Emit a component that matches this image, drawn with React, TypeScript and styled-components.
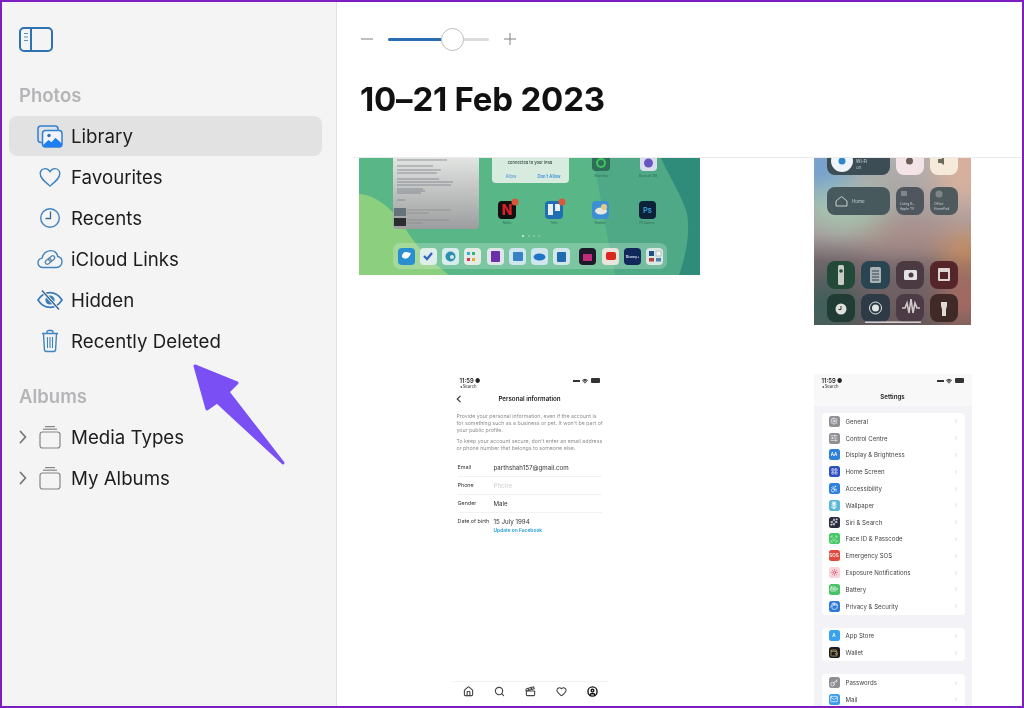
import React from 'react'
import styled, { createGlobalStyle } from 'styled-components'
import {
  Accessibility,
  BatteryFull,
  ChevronRight,
  CircleUser,
  Clapperboard,
  Flower2,
  Hand,
  Heart,
  Home,
  Key,
  LayoutGrid,
  Mail,
  ScanFace,
  Search,
  Settings,
  SlidersHorizontal,
  Sparkles,
  Sun,
  Wallet,
  Wifi,
} from 'lucide-react'

const GlobalStyle = createGlobalStyle`
  html, body { margin: 0; padding: 0; background: #fff; }
  * { box-sizing: border-box; }
`

const Frame = styled.div`
  position: relative;
  display: flex;
  width: 1024px;
  height: 708px;
  overflow: hidden;
  border: 2px solid #7d1fc0;
  font-family: Inter, 'Liberation Sans', sans-serif;
  color: #1d1d1f;
  background: #fff;
  filter: blur(0.3px);
`

const Sidebar = styled.aside`
  flex: 0 0 335px;
  padding: 24px 14px 0 7px;
  background: #f4f4f5;
  border-right: 1px solid #dfdfdf;
`

const ToggleButton = styled.svg`
  display: block;
  width: 35px;
  height: 27px;
  margin-left: 10px;
`

const SectionLabel = styled.h2<{ $gap: number }>`
  margin: ${(p) => p.$gap}px 0 9px 10px;
  height: 24px;
  font-size: 18.5px;
  line-height: 24px;
  font-weight: 600;
  color: #b5b5b8;
`

const NavList = styled.ul`
  display: flex;
  flex-direction: column;
  gap: 1px;
  margin: 0;
  padding: 0;
  list-style: none;
`

const NavRow = styled.li<{ $selected?: boolean }>`
  display: grid;
  grid-template-columns: 28px 26px 1fr;
  align-items: center;
  height: 40px;
  border-radius: 8px;
  font-size: 18.7px;
  background: ${(p) => (p.$selected ? '#e2e2e3' : 'transparent')};
`

const NavText = styled.span`
  margin-left: 8px;
`

const Chevron = styled.svg`
  width: 8px;
  height: 14px;
  margin-left: 10px;
`

const NavIcon = styled.svg`
  display: block;
  width: 26px;
  height: 24px;
`

const ArrowMark = styled.svg`
  position: absolute;
  left: 186px;
  top: 356px;
  width: 104px;
  height: 112px;
`

const Main = styled.main`
  flex: 1;
  min-width: 0;
  display: flex;
  flex-direction: column;
`

const TopBar = styled.header`
  flex: 0 0 155px;
  padding: 26px 0 0 23px;
`

const ZoomRow = styled.div`
  display: flex;
  align-items: center;
  height: 22px;
`

const ZoomGlyph = styled.svg`
  width: 14px;
  height: 14px;
`

const Track = styled.div`
  position: relative;
  width: 101px;
  height: 3px;
  margin: 0 14px;
  border-radius: 2px;
  background: #dcdcdc;
`

const TrackFill = styled.div`
  height: 100%;
  border-radius: 2px;
  background: #2a6db3;
`

const Thumb = styled.div`
  position: absolute;
  top: -10px;
  width: 23px;
  height: 23px;
  border-radius: 50%;
  background: #fff;
  border: 1px solid #bdbdbd;
`

const Title = styled.h1`
  margin: 28px 0 0 0;
  font-size: 33px;
  line-height: 42px;
  font-weight: 700;
  letter-spacing: -0.2px;
  color: #111;
`

const Divider = styled.div`
  height: 1px;
  margin-left: 16px;
  background: #ebebeb;
`

const PhotoGrid = styled.section`
  display: grid;
  grid-template-columns: 341px 341px;
  grid-template-rows: 168px 334px;
  column-gap: 22px;
  row-gap: 48px;
  padding-left: 22px;
  flex: 1;
  overflow: hidden;
`

const PhotoCell = styled.div`
  display: flex;
  justify-content: center;
  align-items: flex-start;
  overflow: hidden;
`

const Blurred = styled.svg`
  display: block;
  filter: blur(0.35px);
`

const PhoneShot = styled.div<{ $bg: string; $h: number }>`
  position: relative;
  display: flex;
  flex-direction: column;
  flex: 0 0 158px;
  width: 158px;
  height: ${(p) => p.$h}px;
  overflow: hidden;
  background: ${(p) => p.$bg};
  font-size: 5.4px;
  color: #333;
  filter: blur(0.35px);
`

const StatusBar = styled.div<{ $pad: number; $bg?: string }>`
  display: flex;
  justify-content: space-between;
  padding: 3px ${(p) => p.$pad}px 0;
  background: ${(p) => p.$bg || 'transparent'};
`

const Clock = styled.div`
  font-size: 5.8px;
  font-weight: 600;
  color: #222;
  line-height: 7px;
`

const BackLink = styled.div`
  font-size: 4.2px;
  line-height: 6px;
`

const StatusIcons = styled.div`
  display: flex;
  align-items: center;
  gap: 2.5px;
  height: 7px;
`

const Signal = styled.span`
  width: 7px;
  height: 3px;
  border-bottom: 2px solid #333;
`

const Battery = styled.span`
  width: 9px;
  height: 5px;
  border-radius: 1px;
  background: #333;
`

const ProfileNav = styled.div`
  position: relative;
  margin-top: 2px;
  height: 14px;
  line-height: 14px;
  text-align: center;
  font-size: 6.2px;
  font-weight: 600;
  color: #222;
`

const BackChevron = styled.svg`
  position: absolute;
  left: 5px;
  top: 3px;
  width: 6px;
  height: 8px;
`

const Notice = styled.p`
  margin: 7px 5px 0 6px;
  font-size: 5.25px;
  line-height: 6.8px;
  color: #8e8e8e;
  & + & {
    margin-top: 5px;
  }
`

const ProfileRows = styled.div`
  margin: 7px 0 0 7px;
  display: flex;
  flex-direction: column;
`

const ProfileRow = styled.div`
  display: grid;
  grid-template-columns: 36px 1fr;
  align-items: center;
  height: 18px;
  margin-right: 7px;
  font-size: 6.2px;
  border-bottom: 1px solid #f3f3f3;
  & > span:first-child {
    font-size: 5.4px;
  }
`

const BirthRow = styled(ProfileRow)`
  align-items: start;
  height: 24px;
  padding-top: 5px;
  border-bottom: 0;
`

const Placeholder = styled.span`
  color: #cfcfcf;
`

const FacebookLink = styled.div`
  margin-top: 2px;
  font-size: 4.9px;
  font-weight: 600;
  color: #2b9fd8;
`

const TabBar = styled.div`
  margin-top: auto;
  display: flex;
  justify-content: space-between;
  align-items: center;
  height: 19px;
  padding: 0 10.5px 0 12px;
  border-top: 1px solid #f3f3f3;
  color: #444;
`

const SettingsHead = styled.div`
  background: #f8f8f9;
  height: 32px;
`

const SettingsTitle = styled.div`
  margin-top: 2px;
  text-align: center;
  font-size: 6.2px;
  font-weight: 600;
  line-height: 10px;
  color: #222;
`

const SettingsBody = styled.div`
  display: flex;
  flex-direction: column;
  gap: 13px;
  padding: 7px 7px 0 8px;
`

const SettingsGroup = styled.div`
  border-radius: 4px;
  background: #fff;
`

const SettingsRow = styled.div`
  display: grid;
  grid-template-columns: 11px 1fr 6px;
  column-gap: 6px;
  align-items: center;
  height: 16.8px;
  padding: 0 6px 0 7px;
  font-size: 6.1px;
  color: #444;
`

const AppTile = styled.span<{ $bg: string }>`
  display: flex;
  align-items: center;
  justify-content: center;
  width: 11px;
  height: 11px;
  border-radius: 2.5px;
  background: ${(p) => p.$bg};
  color: #fff;
  font-size: 4.5px;
  font-weight: 600;
`

const iconBlue = '#3f83bf'

const SidebarToggle = () => (
  <ToggleButton viewBox="0 0 35 27" fill="none" stroke="#2f72b4" strokeWidth="2">
    <rect x="1" y="2" width="32" height="23" rx="4" />
    <path d="M12 2v23" />
    <path d="M5 7.5h4M5 11h4M5 14.5h4" strokeWidth="1.2" stroke="#5b8fc2" />
  </ToggleButton>
)

const LibraryIcon = () => (
  <NavIcon viewBox="0 0 26 24" fill="none" stroke="#2f7fd6" strokeWidth="1.5">
    <path d="M6 18.5H4a3 3 0 0 1-3-3V5a3 3 0 0 1 3-3h14a3 3 0 0 1 3 3v1" />
    <rect x="5.5" y="6.5" width="19.5" height="16.5" rx="3" fill="#f0f4fa" stroke="#2f7fd6" />
    <circle cx="12" cy="11.5" r="1.7" fill="#2f6fb8" stroke="none" />
    <path d="M6 21l5.5-5 3 2.2 4-4.5 6.5 6V23H7.5z" fill="#1f7ff0" stroke="none" />
  </NavIcon>
)

const HeartIcon = () => (
  <NavIcon viewBox="0 0 26 24" fill="none" stroke={iconBlue} strokeWidth="1.4">
    <path d="M13 21C8 17 3.2 13.5 3.2 8.6 3.2 5.6 5.4 3.6 8 3.6c2.1 0 3.9 1.1 5 3 1.1-1.9 2.9-3 5-3 2.6 0 4.8 2 4.8 5 0 4.9-4.8 8.4-9.8 12.4z" />
  </NavIcon>
)

const ClockIcon = () => (
  <NavIcon viewBox="0 0 26 24" fill="none" stroke={iconBlue} strokeWidth="1.4">
    <circle cx="13" cy="12" r="9.3" />
    <path d="M13.5 5.5V12.5H8.5" strokeWidth="1.3" stroke="#3a6a96" />
  </NavIcon>
)

const CloudLinkIcon = () => (
  <NavIcon viewBox="0 0 26 24" fill="none" stroke={iconBlue} strokeWidth="1.4">
    <path d="M6 20.5c-2.8 0-5-2-5-4.7 0-2.4 1.7-4.3 4-4.7C6 7 9.4 4 13.5 3.6c3.7-.2 6.8 2.4 7.2 5.9 2.6.6 4.3 2.7 4.3 5.2 0 3.2-2.4 5.8-5.6 5.8z" />
    <g transform="rotate(-40 13 13)" strokeWidth="1.3" stroke="#5e86ab">
      <rect x="7.5" y="11" width="6.5" height="4" rx="2" />
      <rect x="12" y="11" width="6.5" height="4" rx="2" />
    </g>
  </NavIcon>
)

const HiddenIcon = () => (
  <NavIcon viewBox="0 0 26 24" fill="none" stroke="#3a7db8" strokeWidth="1.7">
    <path d="M1 12c3-4.7 7.3-7.3 12-7.3S22 7.3 25 12c-3 4.7-7.3 7.3-12 7.3S4 16.7 1 12z" />
    <circle cx="13" cy="12" r="4.6" fill="#3a7db8" stroke="none" />
    <path d="M5 2.5l17 19" stroke="#f4f4f5" strokeWidth="3.2" />
    <path d="M5 2.5l17 19" strokeWidth="1.3" stroke="#2f5f8e" />
  </NavIcon>
)

const TrashIcon = () => (
  <NavIcon viewBox="0 0 26 24" fill="none" stroke={iconBlue} strokeWidth="1.4">
    <path d="M5 4.5h16M10 4.5V3a1.5 1.5 0 0 1 1.5-1.5h3A1.5 1.5 0 0 1 16 3v1.5" />
    <path d="M6.5 4.5l.9 16a2 2 0 0 0 2 2h7.2a2 2 0 0 0 2-2l.9-16" />
    <path d="M10.5 8v11M13 8v11M15.5 8v11" strokeWidth="1.1" />
  </NavIcon>
)

const AlbumStackIcon = () => (
  <NavIcon viewBox="0 0 26 24" fill="none" stroke="#85858a" strokeWidth="1.2">
    <rect x="3" y="7" width="20" height="16" rx="2.5" />
    <path d="M6 4.2h14" />
    <path d="M8 1.6h10" />
  </NavIcon>
)

const Expand = () => (
  <Chevron viewBox="0 0 8 14" fill="none" stroke="#77777b" strokeWidth="1.8" strokeLinecap="round" strokeLinejoin="round">
    <path d="M1.5 1.5 6.5 7l-5 5.5" />
  </Chevron>
)

const SidePanel = () => (
  <Sidebar>
    <SidebarToggle />
    <SectionLabel $gap={30}>Photos</SectionLabel>
    <NavList>
      <NavRow $selected>
        <span />
        <LibraryIcon />
        <NavText>Library</NavText>
      </NavRow>
      <NavRow>
        <span />
        <HeartIcon />
        <NavText>Favourites</NavText>
      </NavRow>
      <NavRow>
        <span />
        <ClockIcon />
        <NavText>Recents</NavText>
      </NavRow>
      <NavRow>
        <span />
        <CloudLinkIcon />
        <NavText>iCloud Links</NavText>
      </NavRow>
      <NavRow>
        <span />
        <HiddenIcon />
        <NavText>Hidden</NavText>
      </NavRow>
      <NavRow>
        <span />
        <TrashIcon />
        <NavText>Recently Deleted</NavText>
      </NavRow>
    </NavList>
    <SectionLabel $gap={23}>Albums</SectionLabel>
    <NavList>
      <NavRow>
        <Expand />
        <AlbumStackIcon />
        <NavText>Media Types</NavText>
      </NavRow>
      <NavRow>
        <Expand />
        <AlbumStackIcon />
        <NavText>My Albums</NavText>
      </NavRow>
    </NavList>
  </Sidebar>
)

const dockApps = [
  { x: 39, c: '#2a8fd0' },
  { x: 61, c: '#dfeee8' },
  { x: 83, c: '#d9ecec' },
  { x: 105, c: '#e3ede6' },
  { x: 128, c: '#dfe6ea' },
  { x: 150, c: '#cfe6ee' },
  { x: 172, c: '#cfe6ee' },
  { x: 194, c: '#d3e6ea' },
  { x: 220, c: '#1c1a2a' },
  { x: 243, c: '#e9e4dc' },
  { x: 265, c: '#12285a' },
  { x: 287, c: '#d7e9e2' },
]

const IpadHome = () => (
  <Blurred width="341" height="117" viewBox="0 0 341 117">
    <rect width="341" height="117" fill="#58b687" />
    <path d="M0 36C14 36 34 50 46 70c9 16 24 32 44 47H0z" fill="#8ccf7f" />
    <path d="M234 0c8 40 14 80 22 117H341V0z" fill="#4fa986" />
    <path d="M302 0c8 18 20 36 26 55 3 18 0 40-8 62h21V0z" fill="#2f8b7a" />

    <defs>
      <linearGradient id="docGrad" x1="0" y1="0" x2="0" y2="1">
        <stop offset="0" stopColor="#e2e4e2" />
        <stop offset="1" stopColor="#9c9d9e" />
      </linearGradient>
    </defs>
    <path d="M34 0h86v67a4 4 0 0 1-4 4H38a4 4 0 0 1-4-4z" fill="url(#docGrad)" />
    <g stroke="#6f7480" strokeWidth="0.7">
      <path d="M38 2h50M38 8h36M38 12h44M38 15h40M38 21h42M38 24h56M38 27h54M38 31h26M38 33h28M38 35h24M38 42h8" />
      <path d="M48 52h44M48 55h22M48 62h42M48 65h16" stroke="#888" />
    </g>
    <rect x="35" y="50" width="12" height="8" fill="#66727a" />
    <rect x="35" y="60" width="12" height="8" fill="#2a2c30" />

    <path d="M133 0h77v21a4 4 0 0 1-4 4h-69a4 4 0 0 1-4-4z" fill="#d7ecdf" />
    <text x="171" y="6" textAnchor="middle" fontSize="4" fontWeight="600" fill="#4d5a55">connected to your iPad</text>
    <text x="152" y="20" textAnchor="middle" fontSize="4.2" fontWeight="600" fill="#6fa6d6">Allow</text>
    <text x="190" y="20" textAnchor="middle" fontSize="4.2" fontWeight="600" fill="#3f8fd8">Don't Allow</text>

    <rect x="233" y="-5" width="18" height="18" rx="4" fill="#2f6f5a" />
    <circle cx="242" cy="5" r="5" fill="#42c260" />
    <circle cx="242" cy="5" r="3" fill="#2f6f5a" />
    <text x="242" y="19" textAnchor="middle" fontSize="2.8" fill="#2f6a55">WhatsApp</text>
    <rect x="281" y="-5" width="17" height="18" rx="4" fill="#d8dcec" />
    <circle cx="289.5" cy="5" r="4.5" fill="#6a55c0" />
    <text x="289" y="19" textAnchor="middle" fontSize="2.8" fill="#2f6a55">Microsoft 365</text>

    <rect x="139" y="43" width="18" height="18" rx="4" fill="#111" />
    <text x="148" y="57" textAnchor="middle" fontSize="14" fontWeight="800" fill="#d81f26">N</text>
    <circle cx="156" cy="44" r="3.5" fill="#d9573a" />
    <text x="148" y="65.5" textAnchor="middle" fontSize="2.8" fill="#2f6a55">Netflix</text>

    <rect x="186" y="43" width="18" height="18" rx="4" fill="#1f6fb4" />
    <rect x="189" y="46" width="5" height="11" fill="#e8f0f4" />
    <rect x="196" y="46" width="5" height="7" fill="#e8f0f4" />
    <circle cx="203" cy="44" r="3.5" fill="#d9573a" />
    <text x="195" y="65.5" textAnchor="middle" fontSize="2.8" fill="#2f6a55">Trello</text>

    <rect x="233" y="43" width="17" height="18" rx="4" fill="#3d8fd4" />
    <ellipse cx="242" cy="53" rx="6" ry="3.5" fill="#e6e8e0" />
    <circle cx="245" cy="49" r="3" fill="#e2c98a" />
    <text x="241" y="65.5" textAnchor="middle" fontSize="2.8" fill="#2f6a55">Weather</text>

    <rect x="280" y="43" width="17" height="18" rx="4" fill="#0c2238" />
    <text x="288.5" y="55" textAnchor="middle" fontSize="7.5" fontWeight="600" fill="#3ea6e8">Ps</text>
    <text x="288" y="65.5" textAnchor="middle" fontSize="2.8" fill="#2f6a55">PS Express</text>

    <g fill="#d6efe0">
      <circle cx="164" cy="78" r="1.1" />
      <circle cx="170" cy="78" r="0.8" opacity="0.6" />
      <circle cx="175" cy="78" r="0.8" opacity="0.6" />
      <circle cx="180" cy="78" r="0.8" opacity="0.6" />
    </g>

    <rect x="34" y="85" width="274" height="26" rx="7" fill="#fff" opacity="0.22" />
    {dockApps.map((a) => (
      <rect key={a.x} x={a.x} y="90" width="17" height="17" rx="4" fill={a.c} />
    ))}
    <path d="M43 99c3 3 7 2 9-4-2 0-3-1-5-1-2 0-3 1-3 2-1 0-1 2-1 3z" fill="#fff" />
    <path d="M65 98l3 3 5-6" stroke="#2f62c4" strokeWidth="2.2" fill="none" />
    <circle cx="91.5" cy="98.5" r="5" fill="#2e8fb0" />
    <circle cx="93" cy="99" r="2" fill="#d9ecec" />
    <rect x="108" y="94" width="3" height="3" fill="#2fb0d8" />
    <rect x="113" y="94" width="3" height="3" fill="#3fb070" />
    <rect x="108" y="100" width="3" height="3" fill="#d8305a" />
    <rect x="113" y="100" width="3" height="3" fill="#e0aa30" />
    <rect x="132" y="93" width="9" height="11" rx="1" fill="#6b2fa8" />
    <rect x="154" y="94" width="10" height="9" rx="1" fill="#3a82c8" />
    <ellipse cx="180.5" cy="99" rx="6" ry="3.5" fill="#1f74c8" />
    <rect x="198" y="94" width="9" height="10" rx="1" fill="#1f6ab0" />
    <rect x="224" y="96" width="9" height="7" fill="#c02c7a" />
    <rect x="247" y="94" width="10" height="8" rx="2" fill="#d8281f" />
    <text x="273.5" y="100" textAnchor="middle" fontSize="3.4" fontWeight="600" fill="#dfe8f4">Disney+</text>
    <rect x="290" y="93" width="5" height="5" fill="#1f4f88" />
    <rect x="297" y="93" width="5" height="5" fill="#eef4f0" stroke="#557" strokeWidth="0.3" />
    <rect x="290" y="100" width="5" height="3.5" fill="#b5403a" />
    <rect x="297" y="100" width="5" height="3.5" fill="#4f7fae" />
  </Blurred>
)

const tile = (x: number, y: number, w: number, fill: string, h = 28) => (
  <rect x={x} y={y} width={w} height={h} rx="8" fill={fill} />
)

const ControlCentre = () => (
  <Blurred width="157" height="167" viewBox="0 0 157 167">
    <defs>
      <linearGradient id="ccBase" x1="0" y1="0" x2="0" y2="1">
        <stop offset="0" stopColor="#b0b0ae" />
        <stop offset="0.45" stopColor="#a6989a" />
        <stop offset="0.62" stopColor="#75686c" />
        <stop offset="1" stopColor="#66585a" />
      </linearGradient>
      <filter id="ccSoft" x="-40%" y="-40%" width="180%" height="180%">
        <feGaussianBlur stdDeviation="14" />
      </filter>
    </defs>
    <rect width="157" height="167" fill="url(#ccBase)" />
    <g filter="url(#ccSoft)">
      <ellipse cx="8" cy="10" rx="30" ry="26" fill="#6f9fd0" />
      <ellipse cx="30" cy="50" rx="40" ry="22" fill="#a5c8b0" />
      <ellipse cx="150" cy="10" rx="30" ry="40" fill="#d8b09c" />
      <ellipse cx="150" cy="90" rx="28" ry="14" fill="#d89458" />
      <ellipse cx="90" cy="80" rx="50" ry="14" fill="#a88a84" />
      <ellipse cx="10" cy="150" rx="34" ry="30" fill="#3f5f5a" />
      <ellipse cx="150" cy="140" rx="24" ry="30" fill="#a86c62" />
    </g>

    {tile(13, -12, 63, '#3d4d55', 29)}
    <circle cx="28" cy="3" r="11" fill="#eef4f8" />
    <circle cx="28" cy="3" r="3.5" fill="#2f86c8" />
    <text x="42" y="5" fontSize="4.5" fill="#d5dcdf">Wi-Fi</text>
    <text x="42" y="11" fontSize="4" fill="#b5c0c4">On</text>
    {tile(82, -11, 28, '#f3e2e6')}
    <circle cx="95.5" cy="3" r="3.5" fill="#6d5c58" />
    {tile(116, -11, 28, '#f6eada')}
    <path d="M124 1h3l3-2v8l-3-2h-3z" fill="#6d6a5c" />

    {tile(13, 29, 63, '#47595c')}
    <path d="M22 43l5.5-4.5L33 43v5H22z" fill="none" stroke="#c8d2d0" strokeWidth="1" />
    <text x="38" y="45" fontSize="4.5" fill="#c8d2d4">Home</text>
    {tile(82, 29, 28, '#50565e')}
    <rect x="87" y="33" width="6" height="5" fill="#7f858a" />
    <text x="86" y="47" fontSize="3.3" fill="#c8d2d4">Living R...</text>
    <text x="86" y="52" fontSize="3.3" fill="#c8d2d4">Apple TV</text>
    {tile(116, 29, 28, '#4f5a5c')}
    <circle cx="125" cy="36" r="3.5" fill="#7f858a" />
    <text x="120" y="47" fontSize="3.3" fill="#c8d2d4">Office</text>
    <text x="120" y="52" fontSize="3.3" fill="#c8d2d4">HomePod</text>

    {tile(13, 103, 28, '#234a38')}
    <rect x="24" y="107" width="6" height="20" rx="1.5" fill="#c8ccc8" />
    <circle cx="27" cy="113" r="1.8" fill="#234a38" />
    {tile(47, 103, 29, '#2a4552')}
    <rect x="56" y="109" width="11" height="16" rx="1.5" fill="#aab2b4" />
    <path d="M58 113h7M58 116h7M58 119h7M58 122h7" stroke="#2a4552" strokeWidth="1" />
    {tile(82, 103, 28, '#4c3a42')}
    <rect x="90" y="112" width="13" height="10" rx="1.5" fill="#e4e2e2" />
    <circle cx="97" cy="117" r="2.5" fill="#4c3a42" />
    {tile(116, 103, 28, '#54262a')}
    <rect x="124" y="110" width="12" height="13" rx="1" fill="#ddd4d4" />
    <rect x="126" y="114" width="8" height="7" fill="#54262a" />

    {tile(13, 136, 28, '#213c34')}
    <circle cx="27" cy="151" r="5.5" fill="#e0e0dc" />
    <path d="M27 148v3.5h-2.5" stroke="#213c34" fill="none" />
    {tile(47, 136, 29, '#2e3a45')}
    <circle cx="61.5" cy="150" r="6" fill="none" stroke="#e4e6e6" strokeWidth="1" />
    <circle cx="61.5" cy="150" r="3.5" fill="#e4e6e6" />
    {tile(82, 136, 28, '#4c3a44')}
    <path d="M88 150h3l2-5 2 10 2-14 2 14 2-10 2 5h3" fill="none" stroke="#d0cacc" strokeWidth="1.6" />
    {tile(116, 136, 28, '#3f2a28')}
    <path d="M127 144h6v4l-1 3v7h-4v-7l-1-3z" fill="#e0dad6" />
    <rect x="51" y="163.5" width="56" height="1.3" rx="0.6" fill="#f2f2f2" />
  </Blurred>
)

const PhoneStatus = ({ pad, bg }: { pad: number; bg?: string }) => (
  <StatusBar $pad={pad} $bg={bg}>
    <div>
      <Clock>11:59 ●</Clock>
      <BackLink>◂ Search</BackLink>
    </div>
    <StatusIcons>
      <Signal />
      <Wifi size={6} strokeWidth={4} />
      <Battery />
    </StatusIcons>
  </StatusBar>
)

const PersonalInfo = () => (
  <PhoneShot $bg="#fff" $h={326}>
    <PhoneStatus pad={9} />
    <ProfileNav>
      <BackChevron viewBox="0 0 6 8" fill="none" stroke="#333" strokeWidth="1.1">
        <path d="M4.5.8 1.2 4l3.3 3.2" />
      </BackChevron>
      Personal information
    </ProfileNav>
    <Notice>
      Provide your personal information, even if the account is for something such as a business or pet. It won't be part of your public profile.
    </Notice>
    <Notice>
      To keep your account secure, don't enter an email address or phone number that belongs to someone else.
    </Notice>
    <ProfileRows>
      <ProfileRow>
        <span>Email</span>
        <span>parthshah157@gmail.com</span>
      </ProfileRow>
      <ProfileRow>
        <span>Phone</span>
        <Placeholder>Phone</Placeholder>
      </ProfileRow>
      <ProfileRow>
        <span>Gender</span>
        <span>Male</span>
      </ProfileRow>
      <BirthRow>
        <span>Date of birth</span>
        <div>
          15 July 1994
          <FacebookLink>Update on Facebook</FacebookLink>
        </div>
      </BirthRow>
    </ProfileRows>
    <TabBar>
      <Home size={11} strokeWidth={2.4} />
      <Search size={11} strokeWidth={2.4} />
      <Clapperboard size={11} strokeWidth={2.4} />
      <Heart size={11} strokeWidth={2.2} />
      <CircleUser size={11} strokeWidth={3} color="#111" />
    </TabBar>
  </PhoneShot>
)

const settingGroups = [
  [
    { label: 'General', bg: '#8e8e93', icon: <Settings size={8} /> },
    { label: 'Control Centre', bg: '#8e8e93', icon: <SlidersHorizontal size={8} /> },
    { label: 'Display & Brightness', bg: '#2f80dd', icon: 'AA' },
    { label: 'Home Screen', bg: '#2f4fc4', icon: <LayoutGrid size={7} /> },
    { label: 'Accessibility', bg: '#2f7fdd', icon: <Accessibility size={8} /> },
    { label: 'Wallpaper', bg: '#5ab8d8', icon: <Flower2 size={8} /> },
    { label: 'Siri & Search', bg: '#2a2a40', icon: <Sparkles size={8} /> },
    { label: 'Face ID & Passcode', bg: '#44c764', icon: <ScanFace size={8} /> },
    { label: 'Emergency SOS', bg: '#e2483e', icon: 'SOS' },
    { label: 'Exposure Notifications', bg: '#f6d4da', icon: <Sun size={7} color="#d8325a" /> },
    { label: 'Battery', bg: '#48c264', icon: <BatteryFull size={8} /> },
    { label: 'Privacy & Security', bg: '#2f7ad8', icon: <Hand size={8} /> },
  ],
  [
    { label: 'App Store', bg: '#38a2ec', icon: 'A' },
    { label: 'Wallet', bg: '#1c1c1e', icon: <Wallet size={8} color="#d8b878" /> },
  ],
  [
    { label: 'Passwords', bg: '#8e8e93', icon: <Key size={8} /> },
    { label: 'Mail', bg: '#3f9ce8', icon: <Mail size={8} /> },
  ],
]

const SettingsList = () => (
  <PhoneShot $bg="#f2f2f7" $h={334}>
    <SettingsHead>
      <PhoneStatus pad={8} />
      <SettingsTitle>Settings</SettingsTitle>
    </SettingsHead>
    <SettingsBody>
      {settingGroups.map((group) => (
        <SettingsGroup key={group[0].label}>
          {group.map((row) => (
            <SettingsRow key={row.label}>
              <AppTile $bg={row.bg}>{row.icon}</AppTile>
              <span>{row.label}</span>
              <ChevronRight size={6} color="#bbb" />
            </SettingsRow>
          ))}
        </SettingsGroup>
      ))}
    </SettingsBody>
  </PhoneShot>
)

const App: React.FC = () => {
  const zoom = 0.63

  return (
    <>
      <GlobalStyle />
      <Frame>
        <SidePanel />
        <Main>
          <TopBar>
            <ZoomRow>
              <ZoomGlyph viewBox="0 0 14 14" stroke="#808080" strokeWidth="1">
                <path d="M1 7h12" />
              </ZoomGlyph>
              <Track>
                <TrackFill style={{ width: `${zoom * 85}%` }} />
                <Thumb style={{ left: `${zoom * 85 - 1}%` }} />
              </Track>
              <ZoomGlyph viewBox="0 0 14 14" stroke="#808080" strokeWidth="1">
                <path d="M1 7h12M7 1v12" />
              </ZoomGlyph>
            </ZoomRow>
            <Title>10–21 Feb 2023</Title>
          </TopBar>
          <Divider />
          <PhotoGrid>
            <PhotoCell>
              <IpadHome />
            </PhotoCell>
            <PhotoCell>
              <ControlCentre />
            </PhotoCell>
            <PhotoCell>
              <PersonalInfo />
            </PhotoCell>
            <PhotoCell>
              <SettingsList />
            </PhotoCell>
          </PhotoGrid>
        </Main>
        <ArrowMark viewBox="188 358 104 112">
          <path
            d="M195 366 237 383 228 392 283 463 217 402 207 409Z"
            fill="#7a50f5"
            stroke="#7a50f5"
            strokeWidth="3"
            strokeLinejoin="round"
          />
        </ArrowMark>
      </Frame>
    </>
  )
}

export default App
